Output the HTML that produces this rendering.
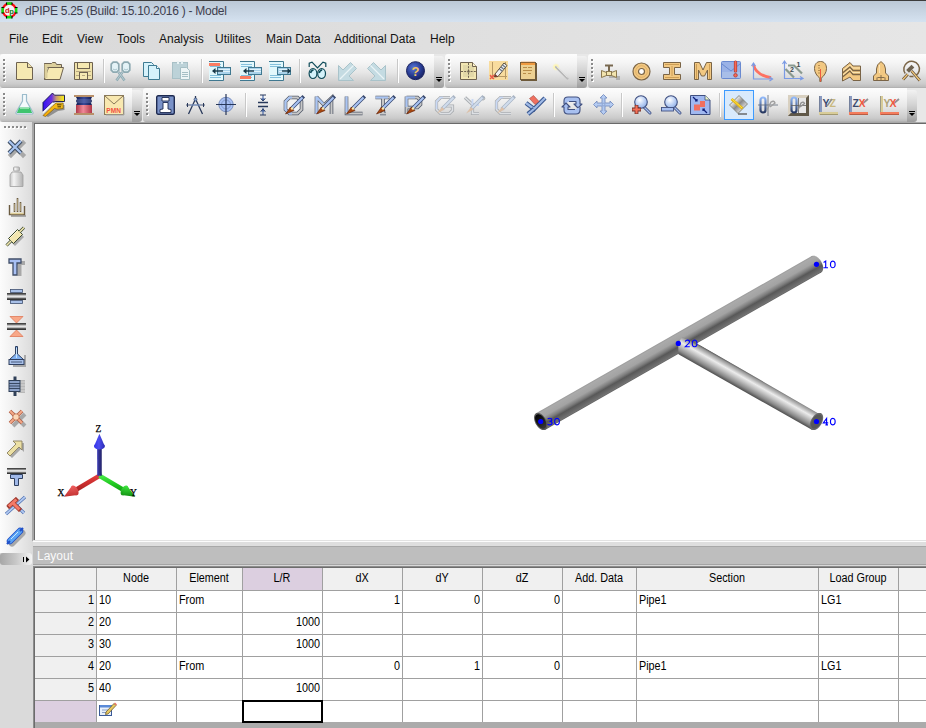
<!DOCTYPE html><html><head><meta charset="utf-8"><style>
*{margin:0;padding:0;box-sizing:border-box}
html,body{width:926px;height:728px;overflow:hidden;background:#dadada;font-family:"Liberation Sans",sans-serif}
.a{position:absolute}
svg.i{position:absolute;overflow:visible}
.tb{position:absolute;background:linear-gradient(#fdfdfd 0%,#f5f5f5 25%,#e6e6e6 55%,#cbcbcb 88%,#bcbcbc 97%,#a8a8a8 100%);border-radius:3px 0 0 3px}
.grip{position:absolute;width:3px}
.sep{position:absolute;width:2px;background:linear-gradient(90deg,#c8c8c8 50%,#fff 50%)}
.chev{position:absolute;background:linear-gradient(#f2f2f2,#d4d4d4 45%,#b4b4b4 80%,#9c9c9c);border-radius:0 3px 3px 0}
.gt{position:absolute;font-size:12px;color:#000;white-space:nowrap;line-height:13px}
</style></head><body>
<div class="a" style="left:0;top:0;width:926px;height:22px;background:linear-gradient(#bac7d5,#d5e2f0)"></div>
<div class="a" style="left:0;top:0;width:926px;height:1px;background:#3c3c3c"></div>
<div class="a" style="left:25px;top:4px;font-size:12px;color:#3e3e4e;white-space:nowrap;letter-spacing:-0.27px">dPIPE 5.25 (Build: 15.10.2016 ) - Model</div>
<div class="a" style="left:0;top:22px;width:926px;height:32px;background:linear-gradient(90deg,#d9d9d9,#e6e6e6)"></div>
<div class="a" style="left:9px;top:32px;font-size:12px;color:#141414;white-space:nowrap">File</div>
<div class="a" style="left:42px;top:32px;font-size:12px;color:#141414;white-space:nowrap">Edit</div>
<div class="a" style="left:77px;top:32px;font-size:12px;color:#141414;white-space:nowrap">View</div>
<div class="a" style="left:117px;top:32px;font-size:12px;color:#141414;white-space:nowrap">Tools</div>
<div class="a" style="left:159px;top:32px;font-size:12px;color:#141414;white-space:nowrap">Analysis</div>
<div class="a" style="left:215px;top:32px;font-size:12px;color:#141414;white-space:nowrap">Utilites</div>
<div class="a" style="left:266px;top:32px;font-size:12px;color:#141414;white-space:nowrap">Main Data</div>
<div class="a" style="left:334px;top:32px;font-size:12px;color:#141414;white-space:nowrap">Additional Data</div>
<div class="a" style="left:430px;top:32px;font-size:12px;color:#141414;white-space:nowrap">Help</div>
<div class="a" style="left:0;top:54px;width:926px;height:68px;background:#e8e8e8"></div>
<div class="tb" style="left:0px;top:54px;width:434px;height:34px"></div>
<div class="a" style="left:4px;top:60px;width:2px;height:2px;background:#fff"></div><div class="a" style="left:3px;top:59px;width:2px;height:2px;background:#8a8a8a"></div><div class="a" style="left:4px;top:64px;width:2px;height:2px;background:#fff"></div><div class="a" style="left:3px;top:63px;width:2px;height:2px;background:#8a8a8a"></div><div class="a" style="left:4px;top:68px;width:2px;height:2px;background:#fff"></div><div class="a" style="left:3px;top:67px;width:2px;height:2px;background:#8a8a8a"></div><div class="a" style="left:4px;top:72px;width:2px;height:2px;background:#fff"></div><div class="a" style="left:3px;top:71px;width:2px;height:2px;background:#8a8a8a"></div><div class="a" style="left:4px;top:76px;width:2px;height:2px;background:#fff"></div><div class="a" style="left:3px;top:75px;width:2px;height:2px;background:#8a8a8a"></div><div class="a" style="left:4px;top:80px;width:2px;height:2px;background:#fff"></div><div class="a" style="left:3px;top:79px;width:2px;height:2px;background:#8a8a8a"></div>
<div class="chev" style="left:434px;top:56px;width:10px;height:32px"></div>
<div class="a" style="left:436px;top:77px;width:6px;height:1px;background:#000"></div>
<svg class="i" style="left:436px;top:79px" width="6" height="4"><path d="M0 0H6L3 3Z" fill="#000"/></svg>
<div class="tb" style="left:445px;top:54px;width:132px;height:34px"></div>
<div class="a" style="left:449px;top:60px;width:2px;height:2px;background:#fff"></div><div class="a" style="left:448px;top:59px;width:2px;height:2px;background:#8a8a8a"></div><div class="a" style="left:449px;top:64px;width:2px;height:2px;background:#fff"></div><div class="a" style="left:448px;top:63px;width:2px;height:2px;background:#8a8a8a"></div><div class="a" style="left:449px;top:68px;width:2px;height:2px;background:#fff"></div><div class="a" style="left:448px;top:67px;width:2px;height:2px;background:#8a8a8a"></div><div class="a" style="left:449px;top:72px;width:2px;height:2px;background:#fff"></div><div class="a" style="left:448px;top:71px;width:2px;height:2px;background:#8a8a8a"></div><div class="a" style="left:449px;top:76px;width:2px;height:2px;background:#fff"></div><div class="a" style="left:448px;top:75px;width:2px;height:2px;background:#8a8a8a"></div><div class="a" style="left:449px;top:80px;width:2px;height:2px;background:#fff"></div><div class="a" style="left:448px;top:79px;width:2px;height:2px;background:#8a8a8a"></div>
<div class="chev" style="left:577px;top:56px;width:10px;height:32px"></div>
<div class="a" style="left:579px;top:77px;width:6px;height:1px;background:#000"></div>
<svg class="i" style="left:579px;top:79px" width="6" height="4"><path d="M0 0H6L3 3Z" fill="#000"/></svg>
<div class="tb" style="left:588px;top:54px;width:338px;height:34px"></div>
<div class="a" style="left:592px;top:60px;width:2px;height:2px;background:#fff"></div><div class="a" style="left:591px;top:59px;width:2px;height:2px;background:#8a8a8a"></div><div class="a" style="left:592px;top:64px;width:2px;height:2px;background:#fff"></div><div class="a" style="left:591px;top:63px;width:2px;height:2px;background:#8a8a8a"></div><div class="a" style="left:592px;top:68px;width:2px;height:2px;background:#fff"></div><div class="a" style="left:591px;top:67px;width:2px;height:2px;background:#8a8a8a"></div><div class="a" style="left:592px;top:72px;width:2px;height:2px;background:#fff"></div><div class="a" style="left:591px;top:71px;width:2px;height:2px;background:#8a8a8a"></div><div class="a" style="left:592px;top:76px;width:2px;height:2px;background:#fff"></div><div class="a" style="left:591px;top:75px;width:2px;height:2px;background:#8a8a8a"></div><div class="a" style="left:592px;top:80px;width:2px;height:2px;background:#fff"></div><div class="a" style="left:591px;top:79px;width:2px;height:2px;background:#8a8a8a"></div>
<div class="tb" style="left:0px;top:88px;width:132px;height:34px"></div>
<div class="a" style="left:4px;top:94px;width:2px;height:2px;background:#fff"></div><div class="a" style="left:3px;top:93px;width:2px;height:2px;background:#8a8a8a"></div><div class="a" style="left:4px;top:98px;width:2px;height:2px;background:#fff"></div><div class="a" style="left:3px;top:97px;width:2px;height:2px;background:#8a8a8a"></div><div class="a" style="left:4px;top:102px;width:2px;height:2px;background:#fff"></div><div class="a" style="left:3px;top:101px;width:2px;height:2px;background:#8a8a8a"></div><div class="a" style="left:4px;top:106px;width:2px;height:2px;background:#fff"></div><div class="a" style="left:3px;top:105px;width:2px;height:2px;background:#8a8a8a"></div><div class="a" style="left:4px;top:110px;width:2px;height:2px;background:#fff"></div><div class="a" style="left:3px;top:109px;width:2px;height:2px;background:#8a8a8a"></div><div class="a" style="left:4px;top:114px;width:2px;height:2px;background:#fff"></div><div class="a" style="left:3px;top:113px;width:2px;height:2px;background:#8a8a8a"></div>
<div class="chev" style="left:132px;top:90px;width:10px;height:32px"></div>
<div class="a" style="left:134px;top:111px;width:6px;height:1px;background:#000"></div>
<svg class="i" style="left:134px;top:113px" width="6" height="4"><path d="M0 0H6L3 3Z" fill="#000"/></svg>
<div class="tb" style="left:143px;top:88px;width:764px;height:34px"></div>
<div class="a" style="left:147px;top:94px;width:2px;height:2px;background:#fff"></div><div class="a" style="left:146px;top:93px;width:2px;height:2px;background:#8a8a8a"></div><div class="a" style="left:147px;top:98px;width:2px;height:2px;background:#fff"></div><div class="a" style="left:146px;top:97px;width:2px;height:2px;background:#8a8a8a"></div><div class="a" style="left:147px;top:102px;width:2px;height:2px;background:#fff"></div><div class="a" style="left:146px;top:101px;width:2px;height:2px;background:#8a8a8a"></div><div class="a" style="left:147px;top:106px;width:2px;height:2px;background:#fff"></div><div class="a" style="left:146px;top:105px;width:2px;height:2px;background:#8a8a8a"></div><div class="a" style="left:147px;top:110px;width:2px;height:2px;background:#fff"></div><div class="a" style="left:146px;top:109px;width:2px;height:2px;background:#8a8a8a"></div><div class="a" style="left:147px;top:114px;width:2px;height:2px;background:#fff"></div><div class="a" style="left:146px;top:113px;width:2px;height:2px;background:#8a8a8a"></div>
<div class="chev" style="left:907px;top:90px;width:10px;height:32px"></div>
<div class="a" style="left:909px;top:111px;width:6px;height:1px;background:#000"></div>
<svg class="i" style="left:909px;top:113px" width="6" height="4"><path d="M0 0H6L3 3Z" fill="#000"/></svg>
<div class="sep" style="left:103px;top:59px;height:24px"></div>
<div class="sep" style="left:201px;top:59px;height:24px"></div>
<div class="sep" style="left:299px;top:59px;height:24px"></div>
<div class="sep" style="left:397px;top:59px;height:24px"></div>
<div class="sep" style="left:245px;top:93px;height:24px"></div>
<div class="sep" style="left:553px;top:93px;height:24px"></div>
<div class="sep" style="left:621px;top:93px;height:24px"></div>
<div class="sep" style="left:719px;top:93px;height:24px"></div>
<div class="a" style="left:0;top:122px;width:32px;height:431px;background:linear-gradient(90deg,#fcfcfc 0%,#f2f2f2 35%,#dcdcdc 100%);border-radius:0 0 3px 0"></div>
<div class="a" style="left:5px;top:127px;width:2px;height:2px;background:#fff"></div>
<div class="a" style="left:4px;top:126px;width:2px;height:2px;background:#8a8a8a"></div>
<div class="a" style="left:9px;top:127px;width:2px;height:2px;background:#fff"></div>
<div class="a" style="left:8px;top:126px;width:2px;height:2px;background:#8a8a8a"></div>
<div class="a" style="left:13px;top:127px;width:2px;height:2px;background:#fff"></div>
<div class="a" style="left:12px;top:126px;width:2px;height:2px;background:#8a8a8a"></div>
<div class="a" style="left:17px;top:127px;width:2px;height:2px;background:#fff"></div>
<div class="a" style="left:16px;top:126px;width:2px;height:2px;background:#8a8a8a"></div>
<div class="a" style="left:21px;top:127px;width:2px;height:2px;background:#fff"></div>
<div class="a" style="left:20px;top:126px;width:2px;height:2px;background:#8a8a8a"></div>
<div class="a" style="left:25px;top:127px;width:2px;height:2px;background:#fff"></div>
<div class="a" style="left:24px;top:126px;width:2px;height:2px;background:#8a8a8a"></div>
<div class="a" style="left:0;top:553px;width:32px;height:12px;background:linear-gradient(90deg,#a6a6a6,#c8c8c8 50%,#f4f4f4);border-radius:3px"></div>
<div class="a" style="left:23px;top:557px;width:1px;height:5px;background:#000"></div>
<svg class="i" style="left:26px;top:556px" width="4" height="7"><path d="M0 0.5V6.5L3.4 3.5Z" fill="#000"/></svg>
<div class="a" style="left:32px;top:122px;width:894px;height:419px;background:#a8a8a8"></div>
<div class="a" style="left:34px;top:123px;width:892px;height:1px;background:#6a6a6a"></div>
<div class="a" style="left:34px;top:123px;width:1px;height:418px;background:#6a6a6a"></div>
<div class="a" style="left:35px;top:124px;width:891px;height:416px;background:#fff" id="cv"></div>
<div class="a" style="left:33px;top:540px;width:893px;height:1px;background:#e2e2e2"></div>
<div class="a" style="left:33px;top:541px;width:893px;height:1px;background:#fcfcfc"></div>
<div class="a" style="left:33px;top:542px;width:893px;height:4px;background:#dedede"></div>
<div class="a" style="left:33px;top:546px;width:893px;height:1px;background:#a8a8a8"></div>
<div class="a" style="left:33px;top:547px;width:893px;height:17px;background:#bebebe"></div>
<div class="a" style="left:33px;top:564px;width:893px;height:1px;background:#a4a4a4"></div>
<div class="a" style="left:33px;top:565px;width:893px;height:1px;background:#d8d8d8"></div>
<div class="a" style="left:37px;top:549px;font-size:12px;color:#fafafa;white-space:nowrap">Layout</div>
<div class="a" style="left:33px;top:566px;width:893px;height:162px;background:#ababab"></div>
<div class="a" style="left:33px;top:566px;width:893px;height:1px;background:#8c8c8c"></div>
<div class="a" style="left:33px;top:567px;width:893px;height:1px;background:#6c6c6c"></div>
<div class="a" style="left:33px;top:566px;width:1px;height:162px;background:#8c8c8c"></div>
<div class="a" style="left:34px;top:567px;width:1px;height:161px;background:#6c6c6c"></div>
<div class="a" style="left:35px;top:568px;width:61px;height:22px;background:#f0f0f0"></div>
<div class="a" style="left:96px;top:568px;width:80px;height:22px;background:#f0f0f0"></div>
<div class="a" style="left:176px;top:568px;width:66px;height:22px;background:#f0f0f0"></div>
<div class="a" style="left:242px;top:568px;width:80px;height:22px;background:#dccfe0"></div>
<div class="a" style="left:322px;top:568px;width:80px;height:22px;background:#f0f0f0"></div>
<div class="a" style="left:402px;top:568px;width:80px;height:22px;background:#f0f0f0"></div>
<div class="a" style="left:482px;top:568px;width:80px;height:22px;background:#f0f0f0"></div>
<div class="a" style="left:562px;top:568px;width:74px;height:22px;background:#f0f0f0"></div>
<div class="a" style="left:636px;top:568px;width:182px;height:22px;background:#f0f0f0"></div>
<div class="a" style="left:818px;top:568px;width:80px;height:22px;background:#f0f0f0"></div>
<div class="a" style="left:898px;top:568px;width:28px;height:22px;background:#f0f0f0"></div>
<div class="a" style="left:35px;top:590px;width:61px;height:22px;background:#f0f0f0"></div>
<div class="a" style="left:96px;top:590px;width:80px;height:22px;background:#ffffff"></div>
<div class="a" style="left:176px;top:590px;width:66px;height:22px;background:#ffffff"></div>
<div class="a" style="left:242px;top:590px;width:80px;height:22px;background:#ffffff"></div>
<div class="a" style="left:322px;top:590px;width:80px;height:22px;background:#ffffff"></div>
<div class="a" style="left:402px;top:590px;width:80px;height:22px;background:#ffffff"></div>
<div class="a" style="left:482px;top:590px;width:80px;height:22px;background:#ffffff"></div>
<div class="a" style="left:562px;top:590px;width:74px;height:22px;background:#ffffff"></div>
<div class="a" style="left:636px;top:590px;width:182px;height:22px;background:#ffffff"></div>
<div class="a" style="left:818px;top:590px;width:80px;height:22px;background:#ffffff"></div>
<div class="a" style="left:898px;top:590px;width:28px;height:22px;background:#ffffff"></div>
<div class="a" style="left:35px;top:612px;width:61px;height:22px;background:#f0f0f0"></div>
<div class="a" style="left:96px;top:612px;width:80px;height:22px;background:#ffffff"></div>
<div class="a" style="left:176px;top:612px;width:66px;height:22px;background:#ffffff"></div>
<div class="a" style="left:242px;top:612px;width:80px;height:22px;background:#ffffff"></div>
<div class="a" style="left:322px;top:612px;width:80px;height:22px;background:#ffffff"></div>
<div class="a" style="left:402px;top:612px;width:80px;height:22px;background:#ffffff"></div>
<div class="a" style="left:482px;top:612px;width:80px;height:22px;background:#ffffff"></div>
<div class="a" style="left:562px;top:612px;width:74px;height:22px;background:#ffffff"></div>
<div class="a" style="left:636px;top:612px;width:182px;height:22px;background:#ffffff"></div>
<div class="a" style="left:818px;top:612px;width:80px;height:22px;background:#ffffff"></div>
<div class="a" style="left:898px;top:612px;width:28px;height:22px;background:#ffffff"></div>
<div class="a" style="left:35px;top:634px;width:61px;height:22px;background:#f0f0f0"></div>
<div class="a" style="left:96px;top:634px;width:80px;height:22px;background:#ffffff"></div>
<div class="a" style="left:176px;top:634px;width:66px;height:22px;background:#ffffff"></div>
<div class="a" style="left:242px;top:634px;width:80px;height:22px;background:#ffffff"></div>
<div class="a" style="left:322px;top:634px;width:80px;height:22px;background:#ffffff"></div>
<div class="a" style="left:402px;top:634px;width:80px;height:22px;background:#ffffff"></div>
<div class="a" style="left:482px;top:634px;width:80px;height:22px;background:#ffffff"></div>
<div class="a" style="left:562px;top:634px;width:74px;height:22px;background:#ffffff"></div>
<div class="a" style="left:636px;top:634px;width:182px;height:22px;background:#ffffff"></div>
<div class="a" style="left:818px;top:634px;width:80px;height:22px;background:#ffffff"></div>
<div class="a" style="left:898px;top:634px;width:28px;height:22px;background:#ffffff"></div>
<div class="a" style="left:35px;top:656px;width:61px;height:22px;background:#f0f0f0"></div>
<div class="a" style="left:96px;top:656px;width:80px;height:22px;background:#ffffff"></div>
<div class="a" style="left:176px;top:656px;width:66px;height:22px;background:#ffffff"></div>
<div class="a" style="left:242px;top:656px;width:80px;height:22px;background:#ffffff"></div>
<div class="a" style="left:322px;top:656px;width:80px;height:22px;background:#ffffff"></div>
<div class="a" style="left:402px;top:656px;width:80px;height:22px;background:#ffffff"></div>
<div class="a" style="left:482px;top:656px;width:80px;height:22px;background:#ffffff"></div>
<div class="a" style="left:562px;top:656px;width:74px;height:22px;background:#ffffff"></div>
<div class="a" style="left:636px;top:656px;width:182px;height:22px;background:#ffffff"></div>
<div class="a" style="left:818px;top:656px;width:80px;height:22px;background:#ffffff"></div>
<div class="a" style="left:898px;top:656px;width:28px;height:22px;background:#ffffff"></div>
<div class="a" style="left:35px;top:678px;width:61px;height:22px;background:#f0f0f0"></div>
<div class="a" style="left:96px;top:678px;width:80px;height:22px;background:#ffffff"></div>
<div class="a" style="left:176px;top:678px;width:66px;height:22px;background:#ffffff"></div>
<div class="a" style="left:242px;top:678px;width:80px;height:22px;background:#ffffff"></div>
<div class="a" style="left:322px;top:678px;width:80px;height:22px;background:#ffffff"></div>
<div class="a" style="left:402px;top:678px;width:80px;height:22px;background:#ffffff"></div>
<div class="a" style="left:482px;top:678px;width:80px;height:22px;background:#ffffff"></div>
<div class="a" style="left:562px;top:678px;width:74px;height:22px;background:#ffffff"></div>
<div class="a" style="left:636px;top:678px;width:182px;height:22px;background:#ffffff"></div>
<div class="a" style="left:818px;top:678px;width:80px;height:22px;background:#ffffff"></div>
<div class="a" style="left:898px;top:678px;width:28px;height:22px;background:#ffffff"></div>
<div class="a" style="left:35px;top:700px;width:61px;height:22px;background:#dccfe0"></div>
<div class="a" style="left:96px;top:700px;width:80px;height:22px;background:#ffffff"></div>
<div class="a" style="left:176px;top:700px;width:66px;height:22px;background:#ffffff"></div>
<div class="a" style="left:242px;top:700px;width:80px;height:22px;background:#ffffff"></div>
<div class="a" style="left:322px;top:700px;width:80px;height:22px;background:#ffffff"></div>
<div class="a" style="left:402px;top:700px;width:80px;height:22px;background:#ffffff"></div>
<div class="a" style="left:482px;top:700px;width:80px;height:22px;background:#ffffff"></div>
<div class="a" style="left:562px;top:700px;width:74px;height:22px;background:#ffffff"></div>
<div class="a" style="left:636px;top:700px;width:182px;height:22px;background:#ffffff"></div>
<div class="a" style="left:818px;top:700px;width:80px;height:22px;background:#ffffff"></div>
<div class="a" style="left:898px;top:700px;width:28px;height:22px;background:#ffffff"></div>
<div class="a" style="left:96px;top:568px;width:1px;height:154px;background:#a0a0a0"></div>
<div class="a" style="left:176px;top:568px;width:1px;height:154px;background:#a0a0a0"></div>
<div class="a" style="left:242px;top:568px;width:1px;height:154px;background:#a0a0a0"></div>
<div class="a" style="left:322px;top:568px;width:1px;height:154px;background:#a0a0a0"></div>
<div class="a" style="left:402px;top:568px;width:1px;height:154px;background:#a0a0a0"></div>
<div class="a" style="left:482px;top:568px;width:1px;height:154px;background:#a0a0a0"></div>
<div class="a" style="left:562px;top:568px;width:1px;height:154px;background:#a0a0a0"></div>
<div class="a" style="left:636px;top:568px;width:1px;height:154px;background:#a0a0a0"></div>
<div class="a" style="left:818px;top:568px;width:1px;height:154px;background:#a0a0a0"></div>
<div class="a" style="left:898px;top:568px;width:1px;height:154px;background:#a0a0a0"></div>
<div class="a" style="left:35px;top:590px;width:891px;height:1px;background:#a0a0a0"></div>
<div class="a" style="left:35px;top:612px;width:891px;height:1px;background:#a0a0a0"></div>
<div class="a" style="left:35px;top:634px;width:891px;height:1px;background:#a0a0a0"></div>
<div class="a" style="left:35px;top:656px;width:891px;height:1px;background:#a0a0a0"></div>
<div class="a" style="left:35px;top:678px;width:891px;height:1px;background:#a0a0a0"></div>
<div class="a" style="left:35px;top:700px;width:891px;height:1px;background:#a0a0a0"></div>
<div class="a" style="left:35px;top:722px;width:891px;height:1px;background:#a0a0a0"></div>
<div class="a" style="left:35px;top:722px;width:891px;height:6px;background:#ababab"></div>
<div class="a" style="left:242px;top:700px;width:81px;height:23px;border:2px solid #000;background:#fff"></div>
<div class="gt" style="left:96px;top:572px;width:80px;text-align:center;transform:scaleX(0.9)">Node</div>
<div class="gt" style="left:176px;top:572px;width:66px;text-align:center;transform:scaleX(0.9)">Element</div>
<div class="gt" style="left:242px;top:572px;width:80px;text-align:center;transform:scaleX(0.9)">L/R</div>
<div class="gt" style="left:322px;top:572px;width:80px;text-align:center;transform:scaleX(0.9)">dX</div>
<div class="gt" style="left:402px;top:572px;width:80px;text-align:center;transform:scaleX(0.9)">dY</div>
<div class="gt" style="left:482px;top:572px;width:80px;text-align:center;transform:scaleX(0.9)">dZ</div>
<div class="gt" style="left:562px;top:572px;width:74px;text-align:center;transform:scaleX(0.9)">Add. Data</div>
<div class="gt" style="left:636px;top:572px;width:182px;text-align:center;transform:scaleX(0.9)">Section</div>
<div class="gt" style="left:818px;top:572px;width:80px;text-align:center;transform:scaleX(0.9)">Load Group</div>
<div class="gt" style="left:35px;top:594px;width:59px;text-align:right;transform:scaleX(0.9);transform-origin:right">1</div>
<div class="gt" style="left:99px;top:594px;transform:scaleX(0.9);transform-origin:left">10</div>
<div class="gt" style="left:179px;top:594px;transform:scaleX(0.9);transform-origin:left">From</div>
<div class="gt" style="left:322px;top:594px;width:78px;text-align:right;transform:scaleX(0.9);transform-origin:right">1</div>
<div class="gt" style="left:402px;top:594px;width:78px;text-align:right;transform:scaleX(0.9);transform-origin:right">0</div>
<div class="gt" style="left:482px;top:594px;width:78px;text-align:right;transform:scaleX(0.9);transform-origin:right">0</div>
<div class="gt" style="left:639px;top:594px;transform:scaleX(0.9);transform-origin:left">Pipe1</div>
<div class="gt" style="left:821px;top:594px;transform:scaleX(0.9);transform-origin:left">LG1</div>
<div class="gt" style="left:35px;top:616px;width:59px;text-align:right;transform:scaleX(0.9);transform-origin:right">2</div>
<div class="gt" style="left:99px;top:616px;transform:scaleX(0.9);transform-origin:left">20</div>
<div class="gt" style="left:242px;top:616px;width:78px;text-align:right;transform:scaleX(0.9);transform-origin:right">1000</div>
<div class="gt" style="left:35px;top:638px;width:59px;text-align:right;transform:scaleX(0.9);transform-origin:right">3</div>
<div class="gt" style="left:99px;top:638px;transform:scaleX(0.9);transform-origin:left">30</div>
<div class="gt" style="left:242px;top:638px;width:78px;text-align:right;transform:scaleX(0.9);transform-origin:right">1000</div>
<div class="gt" style="left:35px;top:660px;width:59px;text-align:right;transform:scaleX(0.9);transform-origin:right">4</div>
<div class="gt" style="left:99px;top:660px;transform:scaleX(0.9);transform-origin:left">20</div>
<div class="gt" style="left:179px;top:660px;transform:scaleX(0.9);transform-origin:left">From</div>
<div class="gt" style="left:322px;top:660px;width:78px;text-align:right;transform:scaleX(0.9);transform-origin:right">0</div>
<div class="gt" style="left:402px;top:660px;width:78px;text-align:right;transform:scaleX(0.9);transform-origin:right">1</div>
<div class="gt" style="left:482px;top:660px;width:78px;text-align:right;transform:scaleX(0.9);transform-origin:right">0</div>
<div class="gt" style="left:639px;top:660px;transform:scaleX(0.9);transform-origin:left">Pipe1</div>
<div class="gt" style="left:821px;top:660px;transform:scaleX(0.9);transform-origin:left">LG1</div>
<div class="gt" style="left:35px;top:682px;width:59px;text-align:right;transform:scaleX(0.9);transform-origin:right">5</div>
<div class="gt" style="left:99px;top:682px;transform:scaleX(0.9);transform-origin:left">40</div>
<div class="gt" style="left:242px;top:682px;width:78px;text-align:right;transform:scaleX(0.9);transform-origin:right">1000</div>
<svg class="i" style="left:0;top:0" width="926" height="728" viewBox="0 0 926 728">
<defs>
<linearGradient id="gm" gradientUnits="userSpaceOnUse" x1="0" y1="-9.43" x2="0" y2="9.43">
<stop offset="0" stop-color="#9a9a9a"/><stop offset="0.08" stop-color="#aaaaaa"/><stop offset="0.35" stop-color="#a3a3a3"/>
<stop offset="0.55" stop-color="#7c7c7c"/><stop offset="0.68" stop-color="#585858"/><stop offset="0.85" stop-color="#686868"/><stop offset="0.95" stop-color="#727272"/><stop offset="1" stop-color="#5a5a5a"/></linearGradient>
<linearGradient id="gb" gradientUnits="userSpaceOnUse" x1="0" y1="-9.43" x2="0" y2="9.43">
<stop offset="0" stop-color="#484848"/><stop offset="0.12" stop-color="#9a9a9a"/><stop offset="0.38" stop-color="#ececec"/>
<stop offset="0.6" stop-color="#bdbdbd"/><stop offset="0.82" stop-color="#8a8a8a"/><stop offset="1" stop-color="#4e4e4e"/></linearGradient>
<linearGradient id="cap30" x1="0" y1="0" x2="0.6" y2="1"><stop offset="0" stop-color="#000"/><stop offset="0.45" stop-color="#141414"/><stop offset="1" stop-color="#343434"/></linearGradient>
<clipPath id="cb"><path d="M678.30 354.60 L678.30 335.50 L699.80 345.00 L959.60 495.00 L959.60 728.00 L678.30 728.00Z"/></clipPath>
</defs>
<g transform="translate(540.70,421.50) rotate(-29.682)"><path d="M321.34 6.65 L321.81 5.72 L322.20 4.69 L322.50 3.58 L322.73 2.41 L322.86 1.20 L322.90 -0.03 L322.85 -1.26 L322.70 -2.47 L322.46 -3.64 L322.14 -4.74 L321.74 -5.76 L321.27 -6.69 L320.73 -7.50 L320.13 -8.18 L319.49 -8.72 L318.81 -9.12 L318.11 -9.35 L317.40 -9.43 L316.69 -9.35 L315.99 -9.10 L315.32 -8.70 L314.69 -8.15 L314.10 -7.46 L313.57 -6.65 L313.10 -5.72 L312.71 -4.69 L312.40 -3.58 L312.18 -2.41 L312.05 -1.20 L312.01 0.03 L312.06 1.26 L312.21 2.47 L312.44 3.64 L312.77 4.74 L313.17 5.76 L313.64 6.69 L314.18 7.50 L314.78 8.18 L315.42 8.72 L316.10 9.12 L316.80 9.35 L317.51 9.43 L318.22 9.35 L318.91 9.10 L319.59 8.70 L320.22 8.15 L320.81 7.46Z" fill="url(#gm)"/><rect x="0" y="-9.43" width="317.45" height="18.86" fill="url(#gm)"/></g>
<path d="M547.37 425.35 L547.31 424.31 L547.14 423.23 L546.86 422.11 L546.48 420.98 L545.99 419.87 L545.42 418.78 L544.76 417.73 L544.03 416.76 L543.25 415.86 L542.43 415.06 L541.57 414.37 L540.70 413.80 L539.83 413.36 L538.97 413.07 L538.15 412.91 L537.37 412.91 L536.64 413.05 L535.98 413.33 L535.41 413.76 L534.93 414.32 L534.54 415.00 L534.26 415.79 L534.09 416.68 L534.03 417.65 L534.09 418.69 L534.26 419.77 L534.54 420.89 L534.93 422.02 L535.41 423.13 L535.98 424.22 L536.64 425.27 L537.37 426.24 L538.15 427.14 L538.97 427.94 L539.83 428.63 L540.70 429.20 L541.57 429.64 L542.43 429.93 L543.25 430.09 L544.03 430.09 L544.76 429.95 L545.42 429.67 L545.99 429.24 L546.48 428.68 L546.86 428.00 L547.14 427.21 L547.31 426.32Z" fill="#5a5a5a"/>
<path d="M546.30 424.73 L546.25 423.86 L546.11 422.95 L545.88 422.01 L545.55 421.07 L545.14 420.13 L544.66 419.21 L544.11 418.34 L543.50 417.52 L542.84 416.76 L542.15 416.09 L541.43 415.51 L540.70 415.03 L539.97 414.67 L539.25 414.42 L538.56 414.29 L537.90 414.28 L537.29 414.40 L536.74 414.64 L536.26 415.00 L535.85 415.47 L535.52 416.04 L535.29 416.70 L535.15 417.45 L535.10 418.27 L535.15 419.14 L535.29 420.05 L535.52 420.99 L535.85 421.93 L536.26 422.87 L536.74 423.79 L537.29 424.66 L537.90 425.48 L538.56 426.24 L539.25 426.91 L539.97 427.49 L540.70 427.97 L541.43 428.33 L542.15 428.58 L542.84 428.71 L543.50 428.72 L544.11 428.60 L544.66 428.36 L545.14 428.00 L545.55 427.53 L545.88 426.96 L546.11 426.30 L546.25 425.55Z" fill="url(#cap30)"/>
<g clip-path="url(#cb)"><g transform="translate(678.30,343.40) rotate(29.472)"><rect x="0" y="-9.43" width="158.74" height="18.86" fill="url(#gb)"/></g></g>
<path d="M809.83 425.35 L809.89 424.31 L810.06 423.23 L810.34 422.11 L810.73 420.98 L811.21 419.87 L811.78 418.78 L812.44 417.73 L813.17 416.76 L813.95 415.86 L814.77 415.06 L815.63 414.37 L816.50 413.80 L817.37 413.36 L818.23 413.07 L819.05 412.91 L819.83 412.91 L820.56 413.05 L821.22 413.33 L821.79 413.76 L822.27 414.32 L822.66 415.00 L822.94 415.79 L823.11 416.68 L823.17 417.65 L823.11 418.69 L822.94 419.77 L822.66 420.89 L822.27 422.02 L821.79 423.13 L821.22 424.22 L820.56 425.27 L819.83 426.24 L819.05 427.14 L818.23 427.94 L817.37 428.63 L816.50 429.20 L815.63 429.64 L814.77 429.93 L813.95 430.09 L813.17 430.09 L812.44 429.95 L811.78 429.67 L811.21 429.24 L810.73 428.68 L810.34 428.00 L810.06 427.21 L809.89 426.32Z" fill="#6a6a6a"/>
<path d="M811.03 424.66 L811.08 423.81 L811.22 422.92 L811.45 422.00 L811.76 421.08 L812.16 420.16 L812.63 419.27 L813.17 418.41 L813.77 417.61 L814.41 416.87 L815.08 416.22 L815.79 415.65 L816.50 415.19 L817.21 414.83 L817.92 414.58 L818.59 414.46 L819.23 414.45 L819.83 414.57 L820.37 414.80 L820.84 415.15 L821.24 415.61 L821.55 416.17 L821.78 416.82 L821.92 417.55 L821.97 418.34 L821.92 419.19 L821.78 420.08 L821.55 421.00 L821.24 421.92 L820.84 422.84 L820.37 423.73 L819.83 424.59 L819.23 425.39 L818.59 426.13 L817.92 426.78 L817.21 427.35 L816.50 427.81 L815.79 428.17 L815.08 428.42 L814.41 428.54 L813.77 428.55 L813.17 428.43 L812.63 428.20 L812.16 427.85 L811.76 427.39 L811.45 426.83 L811.22 426.18 L811.08 425.45Z" fill="#585858"/>
<circle cx="816.5" cy="264.3" r="2.6" fill="#0000ff"/>
<path transform="translate(823.00,260.70)" d="M0.6 1.8L2.7 0.4V7M0.4 7H5" fill="none" stroke="#0000ff" stroke-width="1.15"/>
<path transform="translate(830.20,260.70)" d="M2.6 0.4C0.2 0.4 0.3 3 0.3 3.7C0.3 4.4 0.2 7 2.6 7C5 7 4.9 4.4 4.9 3.7C4.9 3 5 0.4 2.6 0.4Z" fill="none" stroke="#0000ff" stroke-width="1.15"/>
<circle cx="678.3" cy="343.4" r="2.6" fill="#0000ff"/>
<path transform="translate(684.80,339.80)" d="M0.5 1.8C0.8 0.6 1.6 0.3 2.6 0.3C3.8 0.3 4.7 1 4.7 2.1C4.7 3.6 2.2 4.8 0.4 7H5" fill="none" stroke="#0000ff" stroke-width="1.15"/>
<path transform="translate(692.00,339.80)" d="M2.6 0.4C0.2 0.4 0.3 3 0.3 3.7C0.3 4.4 0.2 7 2.6 7C5 7 4.9 4.4 4.9 3.7C4.9 3 5 0.4 2.6 0.4Z" fill="none" stroke="#0000ff" stroke-width="1.15"/>
<circle cx="540.7" cy="421.5" r="2.6" fill="#0000ff"/>
<path transform="translate(547.20,417.90)" d="M0.5 0.9C1 0.5 1.8 0.3 2.6 0.3C3.8 0.3 4.6 1 4.6 1.9C4.6 3 3.6 3.6 2.2 3.6C3.8 3.6 4.9 4.2 4.9 5.2C4.9 6.4 3.8 7 2.5 7C1.6 7 0.8 6.8 0.3 6.3" fill="none" stroke="#0000ff" stroke-width="1.15"/>
<path transform="translate(554.40,417.90)" d="M2.6 0.4C0.2 0.4 0.3 3 0.3 3.7C0.3 4.4 0.2 7 2.6 7C5 7 4.9 4.4 4.9 3.7C4.9 3 5 0.4 2.6 0.4Z" fill="none" stroke="#0000ff" stroke-width="1.15"/>
<circle cx="816.5" cy="421.5" r="2.6" fill="#0000ff"/>
<path transform="translate(823.00,417.90)" d="M3.6 7V0.5L0.3 5H5.2M2.4 7H5" fill="none" stroke="#0000ff" stroke-width="1.15"/>
<path transform="translate(830.20,417.90)" d="M2.6 0.4C0.2 0.4 0.3 3 0.3 3.7C0.3 4.4 0.2 7 2.6 7C5 7 4.9 4.4 4.9 3.7C4.9 3 5 0.4 2.6 0.4Z" fill="none" stroke="#0000ff" stroke-width="1.15"/>
</svg>
<svg class="i" style="left:0;top:0" width="926" height="728" viewBox="0 0 926 728">
<defs>
<linearGradient id="az" x1="0" y1="0" x2="1" y2="0"><stop offset="0" stop-color="#4040b8"/><stop offset="0.45" stop-color="#30308c"/><stop offset="1" stop-color="#242468"/></linearGradient>
<linearGradient id="azh" x1="0" y1="0" x2="1" y2="0"><stop offset="0" stop-color="#3434e8"/><stop offset="0.45" stop-color="#4c4cf0"/><stop offset="1" stop-color="#2c2cb0"/></linearGradient>
<linearGradient id="ax" x1="0" y1="0" x2="0" y2="1"><stop offset="0" stop-color="#e84040"/><stop offset="0.55" stop-color="#c82c2c"/><stop offset="1" stop-color="#a02020"/></linearGradient>
<linearGradient id="axh" x1="0" y1="0" x2="0" y2="1"><stop offset="0" stop-color="#f06060"/><stop offset="1" stop-color="#c03030"/></linearGradient>
<linearGradient id="ay" x1="0" y1="0" x2="0" y2="1"><stop offset="0" stop-color="#50f050"/><stop offset="0.55" stop-color="#20c820"/><stop offset="1" stop-color="#109810"/></linearGradient>
<linearGradient id="ayh" x1="0" y1="0" x2="0" y2="1"><stop offset="0" stop-color="#40e840"/><stop offset="1" stop-color="#108c10"/></linearGradient>
</defs>
<path d="M98.33 473.82 L73.59 488.46 L75.93 492.42 L100.67 477.78Z" fill="url(#ax)"/><path d="M78.57 492.64 L78.50 491.74 L78.28 490.78 L77.93 489.82 L77.45 488.88 L76.88 488.00 L76.22 487.21 L75.50 486.55 L74.76 486.04 L74.02 485.69 L73.30 485.53 L72.64 485.56 L72.06 485.77 L71.59 486.16 L71.24 486.72 L71.02 487.42 L70.95 488.24 L71.02 489.14 L71.24 490.09 L71.59 491.05 L72.06 491.99 L72.64 492.87 L73.30 493.66 L74.02 494.32 L74.76 494.84 L75.50 495.18 L76.22 495.34 L76.88 495.32 L77.45 495.10 L77.93 494.71 L78.28 494.15 L78.50 493.45Z" fill="url(#axh)"/><path d="M64.00 496.80 L72.01 485.80 L77.50 495.07Z" fill="url(#axh)"/>
<path d="M98.33 477.78 L123.26 492.44 L125.59 488.48 L100.67 473.82Z" fill="url(#ay)"/><path d="M120.62 492.66 L120.69 491.76 L120.91 490.81 L121.26 489.85 L121.73 488.91 L122.31 488.03 L122.97 487.24 L123.68 486.58 L124.43 486.06 L125.17 485.72 L125.88 485.56 L126.54 485.58 L127.12 485.80 L127.59 486.19 L127.95 486.75 L128.16 487.45 L128.24 488.26 L128.16 489.16 L127.95 490.11 L127.59 491.08 L127.12 492.02 L126.54 492.90 L125.88 493.69 L125.17 494.35 L124.43 494.86 L123.68 495.21 L122.97 495.37 L122.31 495.34 L121.73 495.13 L121.26 494.74 L120.91 494.18 L120.69 493.48Z" fill="url(#ayh)"/><path d="M135.20 496.80 L121.69 495.11 L127.16 485.82Z" fill="url(#ayh)"/>
<path d="M101.80 475.79 L101.73 446.29 L97.13 446.31 L97.20 475.81Z" fill="url(#az)"/><path d="M95.62 448.50 L96.44 448.89 L97.37 449.17 L98.38 449.35 L99.43 449.41 L100.48 449.35 L101.49 449.17 L102.42 448.89 L103.24 448.50 L103.91 448.03 L104.41 447.49 L104.72 446.91 L104.82 446.30 L104.72 445.69 L104.41 445.11 L103.91 444.57 L103.24 444.10 L102.42 443.71 L101.49 443.43 L100.48 443.25 L99.43 443.19 L98.38 443.25 L97.37 443.43 L96.44 443.71 L95.62 444.10 L94.95 444.57 L94.45 445.11 L94.14 445.69 L94.04 446.30 L94.14 446.91 L94.45 447.49 L94.95 448.03Z" fill="url(#azh)"/><path d="M99.40 433.80 L104.82 446.29 L94.04 446.31Z" fill="url(#azh)"/>
<text x="95.5" y="432" font-family="Liberation Serif" font-size="9.5" fill="#000" stroke="#000" stroke-width="0.25">Z</text>
<text x="57.5" y="496" font-family="Liberation Serif" font-size="9.5" fill="#000" stroke="#000" stroke-width="0.25">X</text>
<text x="130" y="496" font-family="Liberation Serif" font-size="9.5" fill="#000" stroke="#000" stroke-width="0.25">Y</text>
</svg>
<svg class="i" style="left:1px;top:2px" width="17" height="17" viewBox="0 0 17 17"><circle cx="8.3" cy="8.3" r="6.6" fill="#f2f2f8" stroke="#ff1010" stroke-width="2.2"/><path d="M5.5 1.5H11M5.5 15.2H11M1.6 5.5V11M15.2 5.5V11" stroke="#10e010" stroke-width="2.4"/><path d="M5.5 0.5V2.8M11 0.5V2.8M5.5 14V16.5M11 14V16.5M0.5 5.5H2.8M0.5 11H2.8M14 5.5H16.5M14 11H16.5" stroke="#000" stroke-width="1.1"/><text x="4" y="10.5" font-family="Liberation Sans" font-size="7.5" font-weight="bold" fill="#d01010">d</text><text x="8.2" y="11.5" font-family="Liberation Sans" font-size="7.5" font-weight="bold" fill="#108010">p</text></svg>
<svg class="i" style="left:16px;top:62px" width="18" height="18" viewBox="0 0 18 18"><path d="M0.5 0.5H11.5L16.5 5.5V17.5H0.5Z" fill="#f6e9b2" stroke="#6e6250"/><path d="M11.5 0.5V5.5H16.5" fill="#eee0a8" stroke="#6e6250"/></svg>
<svg class="i" style="left:44px;top:62px" width="21" height="18" viewBox="0 0 21 18"><path d="M0.5 1.5H7.5L8.5 0.5H11.5L12.5 2.5H17.5V5.5H0.5Z" fill="#dccf9c" stroke="#6e6250"/><path d="M0.5 1.5V17.5H2" fill="none" stroke="#6e6250"/><path d="M0.5 17.5L4.5 5.5H19.5L16 17.5Z" fill="#f6e9b2" stroke="#6e6250"/><rect x="0.5" y="2" width="3" height="14" fill="#dccf9c"/></svg>
<svg class="i" style="left:74px;top:62px" width="20" height="18" viewBox="0 0 20 18"><path d="M0.5 0.5H18.5V17.5H0.5Z" fill="#efe2aa" stroke="#6e6250"/><rect x="3.5" y="0.5" width="12" height="6" fill="#f6e9b2" stroke="#6e6250"/><rect x="5.5" y="10.5" width="8" height="7" fill="#f6e9b2" stroke="#6e6250"/><path d="M2 9.5H17M2 13.5H5M14 13.5H17" stroke="#b8a880" stroke-width="1"/><path d="M8 13.5H11" stroke="#b8a880"/></svg>
<svg class="i" style="left:110px;top:61px" width="21" height="21" viewBox="0 0 21 21"><path d="M8.5 11L14.5 19.5M12.5 11L6.5 19.5" stroke="#8eaab2" stroke-width="2.6"/><path d="M8.5 11L14.5 19.5M12.5 11L6.5 19.5" stroke="#b8ccd2" stroke-width="1"/><g fill="#e4f3f7" stroke="#8eaab2" stroke-width="1.7"><path d="M3.2 1.2H6.8L8.8 3.2V9.2L6.8 11.2H3.2L1.2 9.2V3.2Z"/><path d="M14.2 1.2H17.8L19.8 3.2V9.2L17.8 11.2H14.2L12.2 9.2V3.2Z"/></g><path d="M3 8Q5 10 7 8M14 8Q16 10 18 8" stroke="#a8c4cc" fill="none"/></svg>
<svg class="i" style="left:143px;top:62px" width="18" height="18" viewBox="0 0 18 18"><path d="M0.5 0.5H8.5L10.5 2.5V14.5H0.5Z" fill="#d6f2fb" stroke="#3f7b92"/><path d="M5.5 3.5H13.5L16.5 6.5V17.5H5.5Z" fill="#d6f2fb" stroke="#3f7b92"/><path d="M13.5 3.5V6.5H16.5" fill="#fff" stroke="#3f7b92"/><path d="M1 14.5H5" stroke="#3f7b92"/></svg>
<svg class="i" style="left:172px;top:61px" width="19" height="19" viewBox="0 0 19 19"><rect x="0.5" y="1.5" width="15" height="16" fill="#bcd2d8" stroke="#a8c0c6"/><rect x="5" y="0" width="2" height="3" fill="#e8f2f4"/><rect x="9" y="0" width="2" height="3" fill="#e8f2f4"/><path d="M8.5 6.5H14.5L17.5 9.5V18.5H8.5Z" fill="#eef5f6" stroke="#a6bfc5"/><path d="M10 11.5H16M10 13.5H16M10 15.5H16" stroke="#a6bfc5"/></svg>
<svg class="i" style="left:209px;top:61px" width="22" height="20" viewBox="0 0 22 20"><path d="M0 0.5H14.5V19.5H0" fill="#e2f8fc" stroke="#3f7890"/><path d="M0 1.5H13" stroke="#3f7890" stroke-width="0"/><path d="M1 3.5H12" stroke="#84c0dc"/><path d="M1 5.5H12" stroke="#84c0dc"/><path d="M1 14.5H12" stroke="#84c0dc"/><path d="M1 16.5H12" stroke="#84c0dc"/><rect x="0" y="2" width="11" height="3" fill="#fb7d62"/><rect x="8.5" y="6.5" width="13" height="7" fill="#a9d2ea" stroke="#3f7890"/><path d="M10 8.5H21M10 10.5H21" stroke="#e0f2fa"/><path d="M4 10H14" stroke="#173848" stroke-width="1.4"/><path d="M3 10L6.5 7V13Z" fill="#173848"/></svg>
<svg class="i" style="left:240px;top:61px" width="22" height="20" viewBox="0 0 22 20"><path d="M0 0.5H14.5V19.5H0" fill="#e2f8fc" stroke="#3f7890"/><path d="M0 1.5H13" stroke="#3f7890" stroke-width="0"/><path d="M1 3.5H12" stroke="#84c0dc"/><path d="M1 5.5H12" stroke="#84c0dc"/><path d="M1 14.5H12" stroke="#84c0dc"/><path d="M1 16.5H12" stroke="#84c0dc"/><rect x="0" y="15" width="11" height="3" fill="#fb7d62"/><rect x="8.5" y="6.5" width="13" height="7" fill="#a9d2ea" stroke="#3f7890"/><path d="M10 8.5H21M10 10.5H21" stroke="#e0f2fa"/><path d="M4 10H14" stroke="#173848" stroke-width="1.4"/><path d="M3 10L6.5 7V13Z" fill="#173848"/></svg>
<svg class="i" style="left:269px;top:61px" width="23" height="20" viewBox="0 0 23 20"><path d="M0 0.5H14.5V19.5H0" fill="#e2f8fc" stroke="#3f7890"/><path d="M0 1.5H13" stroke="#3f7890" stroke-width="0"/><path d="M1 3.5H12" stroke="#84c0dc"/><path d="M1 5.5H12" stroke="#84c0dc"/><path d="M1 14.5H12" stroke="#84c0dc"/><path d="M1 16.5H12" stroke="#84c0dc"/><rect x="8.5" y="6.5" width="13" height="7" fill="#a9d2ea" stroke="#3f7890"/><path d="M10 8.5H21M10 10.5H21" stroke="#e0f2fa"/><path d="M13 10H20" stroke="#173848" stroke-width="1.4"/><path d="M22 10L18.5 7V13Z" fill="#173848"/></svg>
<svg class="i" style="left:308px;top:61px" width="20" height="20" viewBox="0 0 20 20"><path d="M1.2 6V2.2L4 1.2L9.5 6.8L15 1.2L17.8 2.2V6" fill="none" stroke="#0e4a58" stroke-width="1.2"/><g stroke="#0e4a58" fill="#d4f2fa" stroke-width="1.2"><ellipse cx="5" cy="12.6" rx="3.9" ry="4.9"/><ellipse cx="13.6" cy="12.6" rx="3.9" ry="4.9"/></g><path d="M2.6 12Q3 9.5 5.5 9M11.2 12Q11.6 9.5 14.1 9" stroke="#0e4a58" stroke-width="1.6" fill="none"/></svg>
<svg class="i" style="left:338px;top:61px" width="20" height="20" viewBox="0 0 20 20"><path d="M0.5 19.5V4.5L5 9L12.5 1.5L18.5 7.5L11 15L15.5 19.5Z" fill="#c4dbe2" stroke="#a9c3ca" stroke-width="1"/><path d="M2 18L15.5 4.5" stroke="#eaf4f6" stroke-width="1.2"/></svg>
<svg class="i" style="left:366px;top:61px" width="20" height="20" viewBox="0 0 20 20"><path d="M19.5 19.5V4.5L15 9L7.5 1.5L1.5 7.5L9 15L4.5 19.5Z" fill="#c4dbe2" stroke="#a9c3ca" stroke-width="1"/><path d="M18 18L4.5 4.5" stroke="#eaf4f6" stroke-width="1.2"/></svg>
<svg class="i" style="left:406px;top:61px" width="20" height="20" viewBox="0 0 20 20"><defs><radialGradient id="hg" cx="0.4" cy="0.35" r="0.65"><stop offset="0" stop-color="#5a78d8"/><stop offset="0.7" stop-color="#24378c"/><stop offset="1" stop-color="#1a2466"/></radialGradient></defs><circle cx="9.5" cy="9.7" r="9" fill="url(#hg)" stroke="#1c2460" stroke-width="1"/><text x="5.6" y="15" font-family="Liberation Sans" font-weight="bold" font-size="13" fill="#f2c468">?</text></svg>
<svg class="i" style="left:460px;top:62px" width="18" height="19" viewBox="0 0 18 19"><path d="M0.5 0.5H12.5L16.5 4.5V17.5H0.5Z" fill="#f2e6b2" stroke="#6e6250"/><rect x="3" y="3" width="11" height="12" fill="#e2d8a8"/><path d="M8.5 1V17M1 9.5H16" stroke="#6e6250" stroke-dasharray="2 1.2"/><path d="M12.5 0.5V4.5H16.5" fill="#fff5cc" stroke="#6e6250"/><rect x="7.5" y="8.5" width="2" height="2" fill="#6e6250"/></svg>
<svg class="i" style="left:489px;top:61px" width="20" height="20" viewBox="0 0 20 20"><rect x="0" y="0" width="19" height="19" fill="#f8dc9e"/><path d="M3.5 1V18M1 15.5H18M16.5 1V18" stroke="#b89a66" stroke-width="1"/><path d="M6 13L15 2L18 4.5L9 15.5L5.5 16Z" fill="#f0f0f0" stroke="#5a5040"/><path d="M13.5 4L16 6M12 6L14.5 8M10.5 8L13 10" stroke="#6c7888" stroke-width="1.3"/><path d="M5.5 16L6 13L9 15.5Z" fill="#7a3020"/><path d="M1 14L5 18M5 14L1 18" stroke="#f05a4a" stroke-width="1.4"/></svg>
<svg class="i" style="left:520px;top:61px" width="18" height="21" viewBox="0 0 18 21"><rect x="1.5" y="2.5" width="15" height="17" fill="#c9a66a" stroke="#6e5a3a"/><rect x="0.5" y="1.5" width="15" height="17" fill="#ecd092" stroke="#6e5a3a"/><path d="M2 1.5V0.5M4 1.5V0.5M6 1.5V0.5M8 1.5V0.5M10 1.5V0.5M12 1.5V0.5M14 1.5V0.5" stroke="#e07a20"/><rect x="1" y="2" width="14" height="2" fill="#f09a40"/><path d="M3 6.5H7M8 6.5H12M3 9.5H12M3 12.5H6M8 12.5H11" stroke="#b88c48"/></svg>
<svg class="i" style="left:552px;top:63px" width="17" height="17" viewBox="0 0 17 17"><defs><radialGradient id="wg"><stop offset="0" stop-color="#ffffff"/><stop offset="0.4" stop-color="#fff6b0"/><stop offset="1" stop-color="#fff6b0" stop-opacity="0"/></radialGradient></defs><circle cx="4" cy="4" r="4" fill="url(#wg)"/><path d="M4 4L15.5 15.5" stroke="#b8b8b8" stroke-width="2.2" stroke-linecap="round"/><path d="M4.5 3.5L15.5 14.5" stroke="#e8e8e8" stroke-width="0.8"/></svg>
<svg class="i" style="left:601px;top:63px" width="21" height="18" viewBox="0 0 21 18"><path d="M8 13H19V17H15V15H8Z" fill="#b0b0b0"/><path d="M4 2.5H12" stroke="#786850" stroke-width="2"/><path d="M8 3V8" stroke="#786850" stroke-width="2"/><path d="M0.5 7.5L8 10.5L15.5 7.5V14.5L8 11.5L0.5 14.5Z" fill="#f2e4ae" stroke="#8a7850"/><rect x="5.5" y="8.5" width="5" height="4" fill="#f2e4ae" stroke="#8a7850"/></svg>
<svg class="i" style="left:632px;top:62px" width="19" height="19" viewBox="0 0 19 19"><circle cx="9.5" cy="9.5" r="8.5" fill="#f2c882" stroke="#7a6446" stroke-width="1.2"/><circle cx="9.5" cy="9.5" r="5.8" fill="none" stroke="#d8a860" stroke-width="0.8"/><circle cx="9.5" cy="9.5" r="3" fill="#fff" stroke="#7a6446" stroke-width="1.2"/></svg>
<svg class="i" style="left:663px;top:62px" width="18" height="19" viewBox="0 0 18 19"><path d="M0.5 0.5H17.5V5.5H11.5V12.5H17.5V17.5H0.5V12.5H6.5V5.5H0.5Z" fill="#f2c882" stroke="#7a6446"/><path d="M2 2.5H16M9 4V14M2 15.5H16" stroke="#c89850" stroke-width="0.9"/></svg>
<svg class="i" style="left:694px;top:62px" width="18" height="19" viewBox="0 0 18 19"><path d="M0.5 0.5H5.5L9 8L12.5 0.5H17.5V17.5H13.5V8L10.5 14H7.5L4.5 8V17.5H0.5Z" fill="#f2c882" stroke="#7a6446"/><path d="M2.5 2V17M15.5 2V17" stroke="#c89850" stroke-width="0.9"/></svg>
<svg class="i" style="left:721px;top:60px" width="21" height="21" viewBox="0 0 21 21"><rect x="0.5" y="1.5" width="19" height="17" rx="1" fill="#9ab2e6" stroke="#6a8ad0"/><path d="M1 4L10 11L19 4" fill="none" stroke="#6a8ad0" stroke-width="1"/><rect x="1" y="12" width="18" height="6" fill="#a8bee8"/><path d="M14.5 2V11" stroke="#a83028" stroke-width="3.2" stroke-linecap="round"/><path d="M14.5 2V11" stroke="#f46a58" stroke-width="2" stroke-linecap="round"/><circle cx="14.5" cy="15.3" r="1.8" fill="#f46a58" stroke="#a83028" stroke-width="0.7"/></svg>
<svg class="i" style="left:751px;top:62px" width="23" height="18" viewBox="0 0 23 18"><path d="M2.5 3Q5 13 20 15.8" fill="none" stroke="#fe7262" stroke-width="3"/><path d="M0.5 4L2.5 1L4.5 4M18.5 15L21.5 17L18.5 19" fill="none" stroke="#7a9ae4" stroke-width="1.2"/><path d="M2.5 1.5V17H21" fill="none" stroke="#7a9ae4" stroke-width="1.2"/></svg>
<svg class="i" style="left:782px;top:59px" width="22" height="21" viewBox="0 0 22 21"><path d="M2.5 3V19.5H21" fill="none" stroke="#7a9ae4" stroke-width="1.2"/><path d="M0.5 5L2.5 2L4.5 5M18 17.5L21 19.5L18 21" fill="none" stroke="#7a9ae4" stroke-width="1.2"/><path d="M6 6.5H12L20 14.5M3.5 10L12 18.5" fill="none" stroke="#8a9a90" stroke-width="2.2"/><text x="14.5" y="8" font-family="Liberation Sans" font-weight="bold" font-size="7" fill="#3a4a50">1</text><text x="8" y="13" font-family="Liberation Sans" font-weight="bold" font-size="7" fill="#3a4a50">2</text></svg>
<svg class="i" style="left:814px;top:61px" width="14" height="21" viewBox="0 0 14 21"><path d="M6.5 0.5C10.5 0.5 12.5 3.5 12.5 7.5C12.5 11.5 10 15 7.2 17.2V20.5H5.8V17.2C3 15 0.5 11.5 0.5 7.5C0.5 3.5 2.5 0.5 6.5 0.5Z" fill="#f2c882" stroke="#7a6446" stroke-width="1"/><path d="M6.5 8V20.5" stroke="#f05a40" stroke-width="1"/><path d="M4 4.5H6M4 7H6M4 9.5H6M4 12H6" stroke="#a88048" stroke-width="0.8"/></svg>
<svg class="i" style="left:842px;top:62px" width="20" height="20" viewBox="0 0 20 20"><path d="M0.5 6.5L8 0.5L11 4H18.5V18.5H11L8 15L0.5 19Z" fill="#f2c882" stroke="#7a6446"/><path d="M0.5 11L8 5L11 8.5H18.5M0.5 15L8 9L11 12.5H18.5" fill="none" stroke="#7a6446" stroke-width="1.3"/><path d="M1 8.5L8 3L10.5 6H18M1 13L8 7L10.5 10.5H18" fill="none" stroke="#fbe6b6" stroke-width="0.9"/></svg>
<svg class="i" style="left:873px;top:61px" width="17" height="21" viewBox="0 0 17 21"><path d="M8 0.5Q12.5 3.5 12.5 8V12L15.5 15V19.5H0.5V15L3.5 12V8Q3.5 3.5 8 0.5Z" fill="#f2c882" stroke="#7a6446"/><path d="M4 19V16.5M12 19V16.5M8 14V19M4.5 16.5H11.5" stroke="#7a6446" stroke-width="0.9"/><path d="M6.5 4Q6 8 6.5 12" stroke="#fce6bc" fill="none"/></svg>
<svg class="i" style="left:902px;top:61px" width="21" height="21" viewBox="0 0 21 21"><path d="M3.2 12.5A7.8 7.8 0 1 1 13.5 14.8" fill="none" stroke="#7a6446" stroke-width="1.5"/><path d="M7.5 15.2A7.8 7.8 0 0 0 11.5 15.4" fill="none" stroke="#7a6446" stroke-width="1.5"/><path d="M9.5 9.8L17.8 19.5M5.8 13.2L1 18.5" stroke="#6a5640" stroke-width="2.8"/><path d="M9.5 9.8L17.8 19.5M5.8 13.2L1 18.5" stroke="#f6cc7c" stroke-width="1.2"/><path d="M4.2 9L9.5 3.8L12.3 6.6L7 11.8Z" fill="#6e6250"/></svg>
<svg class="i" style="left:15px;top:93px" width="19" height="22" viewBox="0 0 19 22"><path d="M7 1.5H12M7.5 1.5V8L1 19.5Q0.5 21 2.5 21H16.5Q18.5 21 18 19.5L11.5 8V1.5" fill="#f4fafc" stroke="#9cbccc" stroke-width="1.2"/><path d="M4.2 14.5H14.8L17 19.5Q17.2 20 16.5 20H2.5Q1.8 20 2 19.5Z" fill="#3fc46e"/><path d="M5 15.5H14" stroke="#8ee0a8"/></svg>
<svg class="i" style="left:40px;top:90px" width="26" height="27" viewBox="0 0 26 27"><defs><linearGradient id="hb" x1="0" y1="0" x2="1" y2="0"><stop offset="0" stop-color="#3410f4"/><stop offset="0.4" stop-color="#6a30e0"/><stop offset="0.62" stop-color="#c89a70"/><stop offset="1" stop-color="#fcf410"/></linearGradient><linearGradient id="hh" x1="0" y1="1" x2="1" y2="0"><stop offset="0" stop-color="#f8a800"/><stop offset="1" stop-color="#f0c020"/></linearGradient></defs><path d="M6 26L15 17L18 15H24.5V20L18 21L8 27Z" fill="#606060" opacity="0.6"/><path d="M3 12.5L12.5 3L14.5 5.2H24.5V11.5H16L12.5 12.2L3 21.5Z" fill="url(#hb)" stroke="#10104a" stroke-width="0.9" stroke-linejoin="miter"/><path d="M3 22.5L12.5 13.2L15.5 15" stroke="#fff" stroke-width="1.2" fill="none"/><path d="M3 25.5L13 15.5L16 13H23.2V18.5L17 19.2L14.5 18.5L5.5 26.5Z" fill="url(#hh)" stroke="#6a4a08" stroke-width="0.6"/><path d="M17 14.8H21.5M17.5 16.8H21" stroke="#3a2808" stroke-width="0.9"/></svg>
<svg class="i" style="left:73px;top:94px" width="22" height="22" viewBox="0 0 22 22"><defs><linearGradient id="spn" x1="0" y1="0" x2="1" y2="0"><stop offset="0" stop-color="#101c50"/><stop offset="0.5" stop-color="#3a4a98"/><stop offset="1" stop-color="#101c50"/></linearGradient><linearGradient id="spr" x1="0" y1="0" x2="1" y2="0"><stop offset="0" stop-color="#b03848"/><stop offset="0.45" stop-color="#f08898"/><stop offset="1" stop-color="#b03848"/></linearGradient></defs><rect x="1" y="1" width="20" height="2" fill="#b8906a"/><rect x="1" y="19" width="20" height="2" fill="#b8906a"/><path d="M3 3H19L18 5L19 7L18 9L19 11H3L4 9L3 7L4 5Z" fill="url(#spn)"/><path d="M4 6H18M4 8H18" stroke="#8898d0" stroke-width="0.6"/><rect x="3" y="11" width="16" height="8" fill="url(#spr)"/></svg>
<svg class="i" style="left:104px;top:95px" width="21" height="21" viewBox="0 0 21 21"><rect x="0.5" y="0.5" width="19" height="19" fill="#f8e8b0" stroke="#8a7a5a"/><path d="M1 1L10 9L19 1" fill="none" stroke="#8a7a5a" stroke-width="1"/><text x="2.2" y="17.5" font-family="Liberation Sans" font-weight="bold" font-size="6.5" fill="#f05040" letter-spacing="0.2">PMN</text><path d="M20 2V20H2" stroke="#a8a8a8" fill="none"/></svg>
<svg class="i" style="left:156px;top:95px" width="20" height="20" viewBox="0 0 20 20"><rect x="0.7" y="0.7" width="17.6" height="18.6" rx="1.5" fill="#7a92c8" stroke="#1e2a50" stroke-width="1.4"/><path d="M6 2.5H13V6H6Z M7 7.5H12V14L15 14.5V17.5H4V14.5L7 14Z" fill="#fff" stroke="#1e2a50" stroke-width="0.9"/></svg>
<svg class="i" style="left:185px;top:95px" width="21" height="20" viewBox="0 0 21 20"><path d="M10.5 1V4M10.5 4L3.5 19M10.5 4L17.5 19" fill="none" stroke="#28385a" stroke-width="1.3"/><path d="M1 10H20" stroke="#28385a" stroke-width="0.8"/><path d="M5.5 10H15.5" stroke="#8aa8d8" stroke-width="1"/><path d="M2.5 8V12M18.5 8V12" stroke="#28385a"/><circle cx="10.5" cy="4.5" r="1.5" fill="#8aa8d8" stroke="#28385a" stroke-width="0.6"/></svg>
<svg class="i" style="left:216px;top:94px" width="20" height="21" viewBox="0 0 20 21"><circle cx="10" cy="10.5" r="7.2" fill="#a8c0f4" stroke="#7a90c0" stroke-width="1"/><circle cx="10" cy="10.5" r="4.5" fill="none" stroke="#7a90c0" stroke-width="0.8"/><path d="M10 0V21M0 10.5H20" stroke="#28385a" stroke-width="1.2"/></svg>
<svg class="i" style="left:257px;top:94px" width="12" height="22" viewBox="0 0 12 22"><path d="M1 8.5H11M1 12.5H11" stroke="#28385a" stroke-width="1.4"/><path d="M6 1V7M6 14V21" stroke="#4060a0" stroke-width="1.1"/><path d="M3 1H9M3 21H9" stroke="#28385a" stroke-width="1"/><path d="M3.5 4.5L6 7L8.5 4.5M3.5 17.5L6 15L8.5 17.5" fill="#4060a0" stroke="#28385a" stroke-width="0.8"/></svg>
<svg class="i" style="left:283px;top:95px" width="23" height="21" viewBox="0 0 23 21"><path d="M6.5 2.5H14.5L18.5 6.5V14.5L14.5 18.5H6.5L2.5 14.5V6.5Z" fill="#f2f2f2"/><path d="M6.5 2.5H14.5L18.5 6.5V14.5L14.5 18.5H6.5L2.5 14.5V6.5Z" fill="none" stroke="#505868" stroke-width="3.6" stroke-linejoin="miter"/><path d="M6.5 2.5H14.5L18.5 6.5V14.5L14.5 18.5H6.5L2.5 14.5V6.5Z" fill="none" stroke="#c8c8c8" stroke-width="2.0" stroke-linejoin="miter"/><path d="M9 2.5H6.5L2.5 6.5V14.5L6.5 18.5H9" fill="none" stroke="#a8c4f4" stroke-width="2.0" stroke-linejoin="miter"/><path d="M9 13L19.5 2.5" stroke="#3a4a70" stroke-width="3.6" stroke-linecap="square"/><path d="M9 13L19.5 2.5" stroke="#a8c2f2" stroke-width="2.1"/><path d="M2.5 19L7.5 12L11 15.5Z" fill="#a84810" stroke="#5a1a00" stroke-width="0.6"/><circle cx="9" cy="13.5" r="1.3" fill="#f8e8b0"/></svg>
<svg class="i" style="left:314px;top:95px" width="23" height="21" viewBox="0 0 23 21"><path d="M2.5 1.5V19M2.5 2L10 10L17.5 3V19" fill="none" stroke="#505868" stroke-width="3.6" stroke-linejoin="miter"/><path d="M2.5 1.5V19M2.5 2L10 10L17.5 3V19" fill="none" stroke="#c8c8c8" stroke-width="2.0" stroke-linejoin="miter"/><path d="M2.5 1.5V19M2.5 2L9 8.5" fill="none" stroke="#a8c4f4" stroke-width="2.0" stroke-linejoin="miter"/><path d="M9 13L19.5 2.5" stroke="#3a4a70" stroke-width="3.6" stroke-linecap="square"/><path d="M9 13L19.5 2.5" stroke="#a8c2f2" stroke-width="2.1"/><path d="M2.5 19L7.5 12L11 15.5Z" fill="#a84810" stroke="#5a1a00" stroke-width="0.6"/><circle cx="9" cy="13.5" r="1.3" fill="#f8e8b0"/></svg>
<svg class="i" style="left:344px;top:95px" width="23" height="21" viewBox="0 0 23 21"><path d="M2.5 1.5V18.5H18.5" fill="none" stroke="#505868" stroke-width="3.6" stroke-linejoin="miter"/><path d="M2.5 1.5V18.5H18.5" fill="none" stroke="#c8c8c8" stroke-width="2.0" stroke-linejoin="miter"/><path d="M2.5 1.5V17" fill="none" stroke="#a8c4f4" stroke-width="2.0" stroke-linejoin="miter"/><path d="M9 13L19.5 2.5" stroke="#3a4a70" stroke-width="3.6" stroke-linecap="square"/><path d="M9 13L19.5 2.5" stroke="#a8c2f2" stroke-width="2.1"/><path d="M2.5 19L7.5 12L11 15.5Z" fill="#a84810" stroke="#5a1a00" stroke-width="0.6"/><circle cx="9" cy="13.5" r="1.3" fill="#f8e8b0"/></svg>
<svg class="i" style="left:374px;top:95px" width="23" height="21" viewBox="0 0 23 21"><path d="M1.5 2.5H15.5M9 2.5V18.5M6 18.5H12" fill="none" stroke="#505868" stroke-width="3.6" stroke-linejoin="miter"/><path d="M1.5 2.5H15.5M9 2.5V18.5M6 18.5H12" fill="none" stroke="#c8c8c8" stroke-width="2.0" stroke-linejoin="miter"/><path d="M1.5 2.5H14" fill="none" stroke="#a8c4f4" stroke-width="2.0" stroke-linejoin="miter"/><path d="M9 13L19.5 2.5" stroke="#3a4a70" stroke-width="3.6" stroke-linecap="square"/><path d="M9 13L19.5 2.5" stroke="#a8c2f2" stroke-width="2.1"/><path d="M2.5 19L7.5 12L11 15.5Z" fill="#a84810" stroke="#5a1a00" stroke-width="0.6"/><circle cx="9" cy="13.5" r="1.3" fill="#f8e8b0"/></svg>
<svg class="i" style="left:404px;top:95px" width="23" height="21" viewBox="0 0 23 21"><path d="M2.5 1.5V19M2.5 2.5H13.5L16.5 5.5V9.5L13.5 12.5H3" fill="none" stroke="#505868" stroke-width="3.6" stroke-linejoin="miter"/><path d="M2.5 1.5V19M2.5 2.5H13.5L16.5 5.5V9.5L13.5 12.5H3" fill="none" stroke="#c8c8c8" stroke-width="2.0" stroke-linejoin="miter"/><path d="M2.5 1.5V12M2.5 2.5H11" fill="none" stroke="#a8c4f4" stroke-width="2.0" stroke-linejoin="miter"/><path d="M9 13L19.5 2.5" stroke="#3a4a70" stroke-width="3.6" stroke-linecap="square"/><path d="M9 13L19.5 2.5" stroke="#a8c2f2" stroke-width="2.1"/><path d="M2.5 19L7.5 12L11 15.5Z" fill="#a84810" stroke="#5a1a00" stroke-width="0.6"/><circle cx="9" cy="13.5" r="1.3" fill="#f8e8b0"/></svg>
<svg class="i" style="left:434px;top:95px" width="23" height="21" viewBox="0 0 23 21"><path d="M16 2.5H6.5L2.5 6.5V14.5L6.5 18.5H15.5L18.5 15.5V11H12" fill="none" stroke="#a8acb0" stroke-width="3.2" stroke-linejoin="miter"/><path d="M16 2.5H6.5L2.5 6.5V14.5L6.5 18.5H15.5L18.5 15.5V11H12" fill="none" stroke="#dde0e4" stroke-width="1.6" stroke-linejoin="miter"/><path d="M2.5 14V6.5L6.5 2.5H9" fill="none" stroke="#c8d8f4" stroke-width="1.6"/><path d="M9 13L19.5 2.5" stroke="#a8b4c4" stroke-width="3.4" stroke-linecap="square"/><path d="M9 13L19.5 2.5" stroke="#d0dcec" stroke-width="2"/><path d="M3 18.5L8 12L10.5 14.5Z" fill="#dcc0a8"/></svg>
<svg class="i" style="left:463px;top:95px" width="23" height="21" viewBox="0 0 23 21"><path d="M2 2.5L9.5 9.5V18.5H16" fill="none" stroke="#a8acb0" stroke-width="3.2" stroke-linejoin="miter"/><path d="M2 2.5L9.5 9.5V18.5H16" fill="none" stroke="#dde0e4" stroke-width="1.6" stroke-linejoin="miter"/><path d="M9.5 4V10H16" fill="none" stroke="#c8d8f4" stroke-width="1.8"/><circle cx="20" cy="3.2" r="1.8" fill="none" stroke="#909498" stroke-width="0.8"/><path d="M9 13L19.5 2.5" stroke="#a8b4c4" stroke-width="3.4" stroke-linecap="square"/><path d="M9 13L19.5 2.5" stroke="#d0dcec" stroke-width="2"/><path d="M3 18.5L8 12L10.5 14.5Z" fill="#dcc0a8"/></svg>
<svg class="i" style="left:494px;top:95px" width="23" height="21" viewBox="0 0 23 21"><path d="M17 2.5H6.5L2.5 6.5V14.5L6.5 18.5H17" fill="none" stroke="#a8acb0" stroke-width="3.2" stroke-linejoin="miter"/><path d="M17 2.5H6.5L2.5 6.5V14.5L6.5 18.5H17" fill="none" stroke="#dde0e4" stroke-width="1.6" stroke-linejoin="miter"/><path d="M2.5 14V6.5L6.5 2.5H9" fill="none" stroke="#c8d8f4" stroke-width="1.6"/><path d="M9 13L19.5 2.5" stroke="#a8b4c4" stroke-width="3.4" stroke-linecap="square"/><path d="M9 13L19.5 2.5" stroke="#d0dcec" stroke-width="2"/><path d="M3 18.5L8 12L10.5 14.5Z" fill="#dcc0a8"/></svg>
<svg class="i" style="left:525px;top:95px" width="21" height="21" viewBox="0 0 21 21"><path d="M1 8L9 14L20 3" fill="none" stroke="#3a5890" stroke-width="4.4"/><path d="M1 8L9 14L20 3" fill="none" stroke="#a0bae6" stroke-width="2.2"/><path d="M9 14L3 19" stroke="#3a5890" stroke-width="4.4"/><path d="M9 14L3 19" stroke="#a0bae6" stroke-width="2.2"/><path d="M4.5 3.5L8.5 0.5L14 6.5L10 9.5Z" fill="#f07060" stroke="#a04a40" stroke-width="0.6"/></svg>
<svg class="i" style="left:561px;top:95px" width="22" height="21" viewBox="0 0 22 21"><path d="M3 9V6Q3 2 7 2H15Q19 2 19 6V9H21L17 13L13 9H15V6.5H8" fill="#a8c0f0" stroke="#405080" stroke-width="1.1" stroke-linejoin="round"/><path d="M19 12V15Q19 19 15 19H7Q3 19 3 15V12H1L5 8L9 12H7V14.5H14" fill="#a8c0f0" stroke="#405080" stroke-width="1.1" stroke-linejoin="round"/></svg>
<svg class="i" style="left:593px;top:94px" width="21" height="21" viewBox="0 0 21 21"><path d="M10.5 0.5L14 4H12V9H17V7L20.5 10.5L17 14V12H12V17H14L10.5 20.5L7 17H9V12H4V14L0.5 10.5L4 7V9H9V4H7Z" fill="#b4cbf2" stroke="#7890c0" stroke-width="0.9"/><circle cx="10.5" cy="10.5" r="1.3" fill="none" stroke="#7890c0" stroke-width="0.7"/></svg>
<svg class="i" style="left:631px;top:95px" width="22" height="21" viewBox="0 0 22 21"><defs><radialGradient id="lg" cx="0.4" cy="0.35" r="0.7"><stop offset="0" stop-color="#ffffff"/><stop offset="0.6" stop-color="#b8cef4"/><stop offset="1" stop-color="#90aee4"/></radialGradient></defs><path d="M13 12L19 18" stroke="#405080" stroke-width="3" stroke-linecap="round"/><path d="M13 12L19 18" stroke="#a8c0f0" stroke-width="1.2" stroke-linecap="round"/><circle cx="10" cy="7" r="6.3" fill="url(#lg)" stroke="#405080" stroke-width="1.1"/><path d="M5.5 10V19M1 14.5H10" stroke="#703028" stroke-width="3.8"/><path d="M5.5 10.5V18.5M1.5 14.5H9.5" stroke="#f47058" stroke-width="2.2"/></svg>
<svg class="i" style="left:661px;top:95px" width="22" height="21" viewBox="0 0 22 21"><defs><radialGradient id="lg" cx="0.4" cy="0.35" r="0.7"><stop offset="0" stop-color="#ffffff"/><stop offset="0.6" stop-color="#b8cef4"/><stop offset="1" stop-color="#90aee4"/></radialGradient></defs><path d="M13 12L19 18" stroke="#405080" stroke-width="3" stroke-linecap="round"/><path d="M13 12L19 18" stroke="#a8c0f0" stroke-width="1.2" stroke-linecap="round"/><circle cx="10" cy="7" r="6.3" fill="url(#lg)" stroke="#405080" stroke-width="1.1"/><rect x="0.5" y="12.5" width="12" height="3.5" fill="#a8c0f0" stroke="#405080" stroke-width="0.9"/></svg>
<svg class="i" style="left:690px;top:95px" width="21" height="20" viewBox="0 0 21 20"><path d="M0.5 0.5H15L20 5V19.5H0.5Z" fill="#a0b8f0" stroke="#405080"/><path d="M15 0.5V5H20" fill="#e8f0c0" stroke="#405080" stroke-width="0.8"/><path d="M4 9.5H10V6H15V12H10V15.5H4Z" fill="#f07060"/><path d="M3 2L7 6M5 6H7V4M17 18L13 14M15 14H13V16" stroke="#10207a" stroke-width="1.2" fill="none"/></svg>
<div class="a" style="left:724px;top:90px;width:30px;height:30px;background:#d8eafc;border:1px solid #3d9bff"></div>
<svg class="i" style="left:728px;top:94px" width="22" height="22" viewBox="0 0 22 22"><defs><linearGradient id="cyl" x1="0" y1="0" x2="1" y2="1"><stop offset="0" stop-color="#505050"/><stop offset="0.3" stop-color="#e0e0e0"/><stop offset="0.5" stop-color="#8a8a8a"/><stop offset="0.7" stop-color="#c8c8c8"/><stop offset="1" stop-color="#404040"/></linearGradient></defs><path d="M1.5 11L11 1.5L19.5 10L10 19.5Z" fill="url(#cyl)" stroke="#707060" stroke-width="0.7" stroke-linejoin="round"/><path d="M3.5 5L14.5 14.5" stroke="#e8b810" stroke-width="2.8"/><path d="M4 5L14 14" stroke="#f8e050" stroke-width="1"/><path d="M10 20H19" stroke="#606060" stroke-width="1.4"/></svg>
<svg class="i" style="left:758px;top:95px" width="21" height="21" viewBox="0 0 21 21"><defs><linearGradient id="bz" x1="0" y1="0" x2="0" y2="1"><stop offset="0" stop-color="#90b8f8"/><stop offset="1" stop-color="#283860"/></linearGradient></defs><rect x="2.5" y="2.5" width="5" height="15" rx="2.5" fill="none" stroke="url(#bz)" stroke-width="2.2"/><path d="M0 10H20M10 0V21" stroke="#606a78" stroke-width="0.8"/><path d="M9 15L13 7Q16 5 17 8L12 12" fill="none" stroke="#a0a0a0" stroke-width="1.4"/></svg>
<svg class="i" style="left:787px;top:94px" width="23" height="23" viewBox="0 0 23 23"><rect x="1" y="1" width="21" height="21" fill="#9a9080"/><path d="M1 1H22L19 4H4V19L1 22Z" fill="#d8d0c0"/><path d="M22 22H1L4 19H19V4L22 1Z" fill="#605848"/><rect x="4" y="4" width="15" height="15" fill="#e8e8e8"/><g transform="translate(2,1)"><defs><linearGradient id="bz" x1="0" y1="0" x2="0" y2="1"><stop offset="0" stop-color="#90b8f8"/><stop offset="1" stop-color="#283860"/></linearGradient></defs><rect x="2.5" y="2.5" width="5" height="15" rx="2.5" fill="none" stroke="url(#bz)" stroke-width="2.2"/></g><path d="M4 11.5H19M11.5 4V19" stroke="#606060" stroke-width="0.8"/><path d="M11 16L14 9Q16.5 7 17.5 9.5L13 13" fill="none" stroke="#909090" stroke-width="1.3"/></svg>
<svg class="i" style="left:819px;top:96px" width="20" height="19" viewBox="0 0 20 19"><rect x="0" y="0" width="3" height="19" fill="#8a9ac0"/><rect x="0" y="0" width="1" height="19" fill="#606878" opacity="0.5"/><rect x="0" y="16" width="19" height="3" fill="#d8cc98"/><rect x="1" y="18" width="18" height="1" fill="#000" opacity="0.25"/><text x="3.5" y="10.5" font-family="Liberation Sans" font-weight="bold" font-size="10.5" fill="#3a4a70">Y</text><text x="10.5" y="10.5" font-family="Liberation Sans" font-weight="bold" font-size="10.5" fill="#c8b880">Z</text><path d="M8 10L13 3" stroke="#909090" stroke-width="1.6"/></svg>
<svg class="i" style="left:849px;top:96px" width="20" height="19" viewBox="0 0 20 19"><rect x="0" y="0" width="3" height="19" fill="#8a9ac0"/><rect x="0" y="0" width="1" height="19" fill="#606878" opacity="0.5"/><rect x="0" y="16" width="19" height="3" fill="#f47c5c"/><rect x="1" y="18" width="18" height="1" fill="#000" opacity="0.25"/><text x="3.5" y="10.5" font-family="Liberation Sans" font-weight="bold" font-size="10.5" fill="#3a4a70">Z</text><path d="M13 8L19 3" stroke="#909090" stroke-width="1.8"/><text x="9.5" y="10.5" font-family="Liberation Sans" font-weight="bold" font-size="10.5" fill="#f05a40">X</text></svg>
<svg class="i" style="left:880px;top:96px" width="20" height="19" viewBox="0 0 20 19"><rect x="0" y="0" width="3" height="19" fill="#d8cc98"/><rect x="0" y="0" width="1" height="19" fill="#606878" opacity="0.5"/><rect x="0" y="16" width="19" height="3" fill="#f47c5c"/><rect x="1" y="18" width="18" height="1" fill="#000" opacity="0.25"/><text x="3.5" y="10.5" font-family="Liberation Sans" font-weight="bold" font-size="10.5" fill="#b0a478">Y</text><path d="M13 8L19 3" stroke="#909090" stroke-width="1.8"/><text x="9.5" y="10.5" font-family="Liberation Sans" font-weight="bold" font-size="10.5" fill="#f05a40">X</text></svg>
<svg class="i" style="left:7px;top:139px" width="19" height="19" viewBox="0 0 19 19"><path d="M4 4L16 16M16 4L4 16" stroke="#a8a8a8" stroke-width="4.5" stroke-linecap="square"/><path d="M2 2L14 14M14 2L2 14" stroke="#3a4a60" stroke-width="4.2"/><path d="M2 2L14 14M14 2L2 14" stroke="#a8c4f0" stroke-width="2.2"/></svg>
<svg class="i" style="left:9px;top:166px" width="15" height="22" viewBox="0 0 15 22"><defs><linearGradient id="wt" x1="0" y1="0" x2="1" y2="0"><stop offset="0" stop-color="#c8c8c8"/><stop offset="0.3" stop-color="#f4f4f4"/><stop offset="1" stop-color="#b0b0b0"/></linearGradient></defs><rect x="4.5" y="1" width="6" height="4" rx="1" fill="url(#wt)" stroke="#a0a0a0" stroke-width="0.8"/><path d="M3 6H12L14 9V20.5H1V9Z" fill="url(#wt)" stroke="#a0a0a0" stroke-width="0.8"/></svg>
<svg class="i" style="left:8px;top:197px" width="18" height="21" viewBox="0 0 18 21"><path d="M3 18H18V20H3Z" fill="#a8a8a8"/><path d="M1.5 8V17.5H16.5V9" fill="none" stroke="#6a5a40" stroke-width="1.4"/><path d="M2.5 16.5H15.5" stroke="#e0d09a" stroke-width="1.6"/><path d="M6.5 6V15M9.5 1V15M12.5 5V15" stroke="#6a5a40" stroke-width="1.6"/><path d="M6.5 7V14M9.5 2V14M12.5 6V14" stroke="#d8c898" stroke-width="0.5"/></svg>
<svg class="i" style="left:5px;top:225px" width="21" height="22" viewBox="0 0 21 22"><path d="M6 17L15 8L19 12L10 21Z" fill="#a8a8a8"/><path d="M3.5 13.5L12.5 4.5L17.5 9.5L8.5 18.5Z" fill="#f2e6b0" stroke="#3a4a30" stroke-width="1"/><path d="M14.5 7L19 2.5M6 16L1.5 20.5" stroke="#3a4a30" stroke-width="3"/><path d="M14.5 7L19 2.5M6 16L1.5 20.5" stroke="#f2e6b0" stroke-width="1.6"/><path d="M5 13L12.5 5.5" stroke="#fff8d8" stroke-width="1"/></svg>
<svg class="i" style="left:8px;top:258px" width="18" height="19" viewBox="0 0 18 19"><path d="M6 3H17V7H13.5V18H9.5V7H6Z" fill="#a8a8a8"/><path d="M1 1H13V5H9V17H5V5H1Z" fill="#a8c0f4" stroke="#404e68" stroke-width="1.3"/></svg>
<svg class="i" style="left:7px;top:289px" width="19" height="16" viewBox="0 0 19 16"><rect x="3.5" y="0.5" width="12" height="3" fill="#a8c0e8" stroke="#405070" stroke-width="0.8"/><rect x="3.5" y="11.5" width="12" height="3" fill="#a8c0e8" stroke="#405070" stroke-width="0.8"/><defs><linearGradient id="br47" x1="0" y1="0" x2="0" y2="1"><stop offset="0" stop-color="#3a3a3a"/><stop offset="0.15" stop-color="#505050"/><stop offset="0.45" stop-color="#f2f2f2"/><stop offset="0.62" stop-color="#c8c8c8"/><stop offset="0.85" stop-color="#303030"/><stop offset="1" stop-color="#3a3a3a"/></linearGradient></defs><rect x="0" y="4" width="19" height="7" fill="url(#br47)"/></svg>
<svg class="i" style="left:7px;top:316px" width="19" height="22" viewBox="0 0 19 22"><path d="M3 0.5H16L9.5 7Z" fill="#f8a888" stroke="#e07858" stroke-width="0.8"/><path d="M3 20.5H16L9.5 14Z" fill="#f8a888" stroke="#e07858" stroke-width="0.8"/><defs><linearGradient id="br77" x1="0" y1="0" x2="0" y2="1"><stop offset="0" stop-color="#3a3a3a"/><stop offset="0.15" stop-color="#505050"/><stop offset="0.45" stop-color="#f2f2f2"/><stop offset="0.62" stop-color="#c8c8c8"/><stop offset="0.85" stop-color="#303030"/><stop offset="1" stop-color="#3a3a3a"/></linearGradient></defs><rect x="0" y="7" width="19" height="7" fill="url(#br77)"/></svg>
<svg class="i" style="left:8px;top:346px" width="19" height="22" viewBox="0 0 19 22"><path d="M5 19H18V21H5ZM16 9V19H18V9Z" fill="#a8a8a8"/><path d="M7.5 0.5H9.5V8L15.5 13.5H1.5L7.5 8Z" fill="#80b0f0" stroke="#304060" stroke-width="1"/><path d="M8.5 2V12" stroke="#d8f0ff" stroke-width="0.8"/><rect x="1" y="13.5" width="15" height="5" fill="#a8c0e8" stroke="#304060" stroke-width="1"/><path d="M3 16H14" stroke="#304060" stroke-width="0.8"/></svg>
<svg class="i" style="left:8px;top:376px" width="18" height="21" viewBox="0 0 18 21"><path d="M10 4H17V17H10Z" fill="#b8b8b8"/><path d="M11 6H17M11 9H17M11 12H17M11 15H17" stroke="#d8d8d8"/><path d="M7 0.5V20" stroke="#304058" stroke-width="3"/><rect x="1" y="4.5" width="11" height="11" fill="#8aa0c8" stroke="#304058" stroke-width="1"/><path d="M1 7.5H12M1 10H12M1 12.5H12" stroke="#304058" stroke-width="0.9"/></svg>
<svg class="i" style="left:8px;top:409px" width="19" height="19" viewBox="0 0 19 19"><path d="M5 5L17 17M17 5L5 17" stroke="#a8a8a8" stroke-width="4"/><path d="M2 2L14 14M14 2L2 14" stroke="#b06048" stroke-width="3.6"/><path d="M2 2L14 14M14 2L2 14" stroke="#f4a888" stroke-width="2"/><circle cx="8" cy="8" r="3.2" fill="#fcd8b8" stroke="#c07050" stroke-width="0.8"/></svg>
<svg class="i" style="left:6px;top:438px" width="20" height="19" viewBox="0 0 20 19"><path d="M3 17L12 8L9 5H18V14L15 11L6 20Z" fill="#a8a8a8"/><path d="M1 15L10 6L7 3H16V12L13 9L4 18Z" fill="#ece0a4" stroke="#8a8060" stroke-width="0.9"/></svg>
<svg class="i" style="left:7px;top:468px" width="19" height="19" viewBox="0 0 19 19"><defs><linearGradient id="br06" x1="0" y1="0" x2="0" y2="1"><stop offset="0" stop-color="#3a3a3a"/><stop offset="0.15" stop-color="#505050"/><stop offset="0.45" stop-color="#f2f2f2"/><stop offset="0.62" stop-color="#c8c8c8"/><stop offset="0.85" stop-color="#303030"/><stop offset="1" stop-color="#3a3a3a"/></linearGradient></defs><rect x="0" y="0" width="19" height="6" fill="url(#br06)"/><path d="M3.5 6.5H15.5V10.5H11.5V17.5H7.5V10.5H3.5Z" fill="#a0b8e8" stroke="#304060" stroke-width="1"/></svg>
<svg class="i" style="left:5px;top:495px" width="23" height="22" viewBox="0 0 23 22"><path d="M1 19L20 2" stroke="#5070b0" stroke-width="3.2"/><path d="M1 19L20 2" stroke="#b0c8f0" stroke-width="1.8"/><path d="M11 10L19 18" stroke="#5070b0" stroke-width="3.2"/><path d="M11 10L19 18" stroke="#b0c8f0" stroke-width="1.8"/><path d="M3 12L12 4M8 8L15 15" stroke="#a03a30" stroke-width="4.4"/><path d="M3 12L12 4M8 8L15 15" stroke="#f47a68" stroke-width="3"/><path d="M2 10.5L4.5 13.5M10.5 2.5L13.5 5.5M13.5 16.5L16.5 13.5" stroke="#a03a30" stroke-width="1.6"/></svg>
<svg class="i" style="left:6px;top:526px" width="21" height="21" viewBox="0 0 21 21"><path d="M6 17L16 7" stroke="#a8a8a8" stroke-width="7" stroke-linecap="round"/><path d="M4 15L14 5" stroke="#2050c8" stroke-width="6.4" stroke-linecap="round"/><path d="M4 15L14 5" stroke="#5aa4f4" stroke-width="4.6" stroke-linecap="round"/><path d="M1 18L4 15M14 5L17 2" stroke="#2050c8" stroke-width="2.2"/><path d="M5 13L12 6" stroke="#c8e4ff" stroke-width="1"/></svg>
<svg class="i" style="left:99px;top:701px" width="18" height="16" viewBox="0 0 18 16"><rect x="0.5" y="4.5" width="12" height="10" fill="#e8f0fa" stroke="#3a5a98" stroke-width="1"/><rect x="1" y="4" width="12" height="2.5" fill="#5a8ad8"/><path d="M3 9H9M3 11.5H8" stroke="#8aa0c8"/><path d="M7 11L15 2.5L17 4.5L9 13L6.5 13.5Z" fill="#e8c860" stroke="#5a4a20" stroke-width="0.7"/><path d="M15 2.5L16 1.5L18 3.5L17 4.5Z" fill="#e87060"/></svg>
</body></html>
